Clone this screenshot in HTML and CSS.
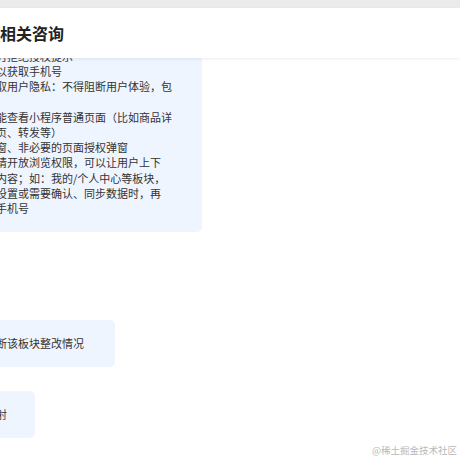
FILE: index.html
```html
<!DOCTYPE html>
<html lang="zh-CN">
<head>
    <meta charset="UTF-8">
    <meta name="viewport" content="width=device-width, initial-scale=1.0">
    <title>相关咨询</title>
    <link rel="stylesheet" href="styles.css">
</head>
<body>
    <div class="page">
        <div class="topbar"></div>

        <header class="header">
            <h1>相关咨询</h1>
        </header>

        <div class="thread">
            <div class="msg msg-long">
                <p>
                    时拒绝授权提示<br>
                    以获取手机号<br>
                    取用户隐私：不得阻断用户体验，包<br>
                    <br>
                    能查看小程序普通页面（比如商品详<br>
                    页、转发等）<br>
                    窗、非必要的页面授权弹窗<br>
                    请开放浏览权限，可以让用户上下<br>
                    内容；如：我的/个人中心等板块，<br>
                    设置或需要确认、同步数据时，再<br>
                    手机号
                </p>
            </div>

            <div class="msg msg-mid">
                <p>断该板块整改情况</p>
            </div>

            <div class="msg msg-short">
                <p>射</p>
            </div>
        </div>

        <div class="watermark">@稀土掘金技术社区</div>
    </div>
</body>
</html>
```

FILE: styles.css
```css
* {
    margin: 0;
    padding: 0;
    box-sizing: border-box;
}

body {
    font-family: "Noto Sans CJK SC", "Noto Sans", sans-serif;
    color: #333;
    background-color: #fff;
    overflow: hidden;
}

.page {
    position: relative;
    width: 460px;
    height: 460px;
    overflow: hidden;
}

.topbar {
    height: 8px;
    background-color: #ebebeb;
}

.header {
    position: relative;
    z-index: 1;
    height: 50px;
    display: flex;
    align-items: center;
    background-color: #fff;
    box-shadow: 0 1px 3px rgba(0, 0, 0, 0.08);
}

.header h1 {
    font-size: 16px;
    font-weight: bold;
    color: #222;
    margin-top: -1px;
}

.thread {
    display: flex;
    flex-direction: column;
    align-items: flex-start;
    margin-top: -25px;
}

.msg {
    margin-left: -20px;
    padding: 16px 28px 16px 16px;
    background-color: #eff5ff;
    border-radius: 5px;
    font-size: 11px;
    line-height: 15.2px;
    white-space: nowrap;
}

.msg-long {
    padding-right: 30px;
    padding-bottom: 15.5px;
}

.msg-mid {
    margin-top: 88px;
    padding-right: 31px;
}

.msg-short {
    margin-top: 24px;
}

.watermark {
    position: absolute;
    right: 3px;
    bottom: 3px;
    font-size: 9.5px;
    color: #b8b8b8;
}
```
